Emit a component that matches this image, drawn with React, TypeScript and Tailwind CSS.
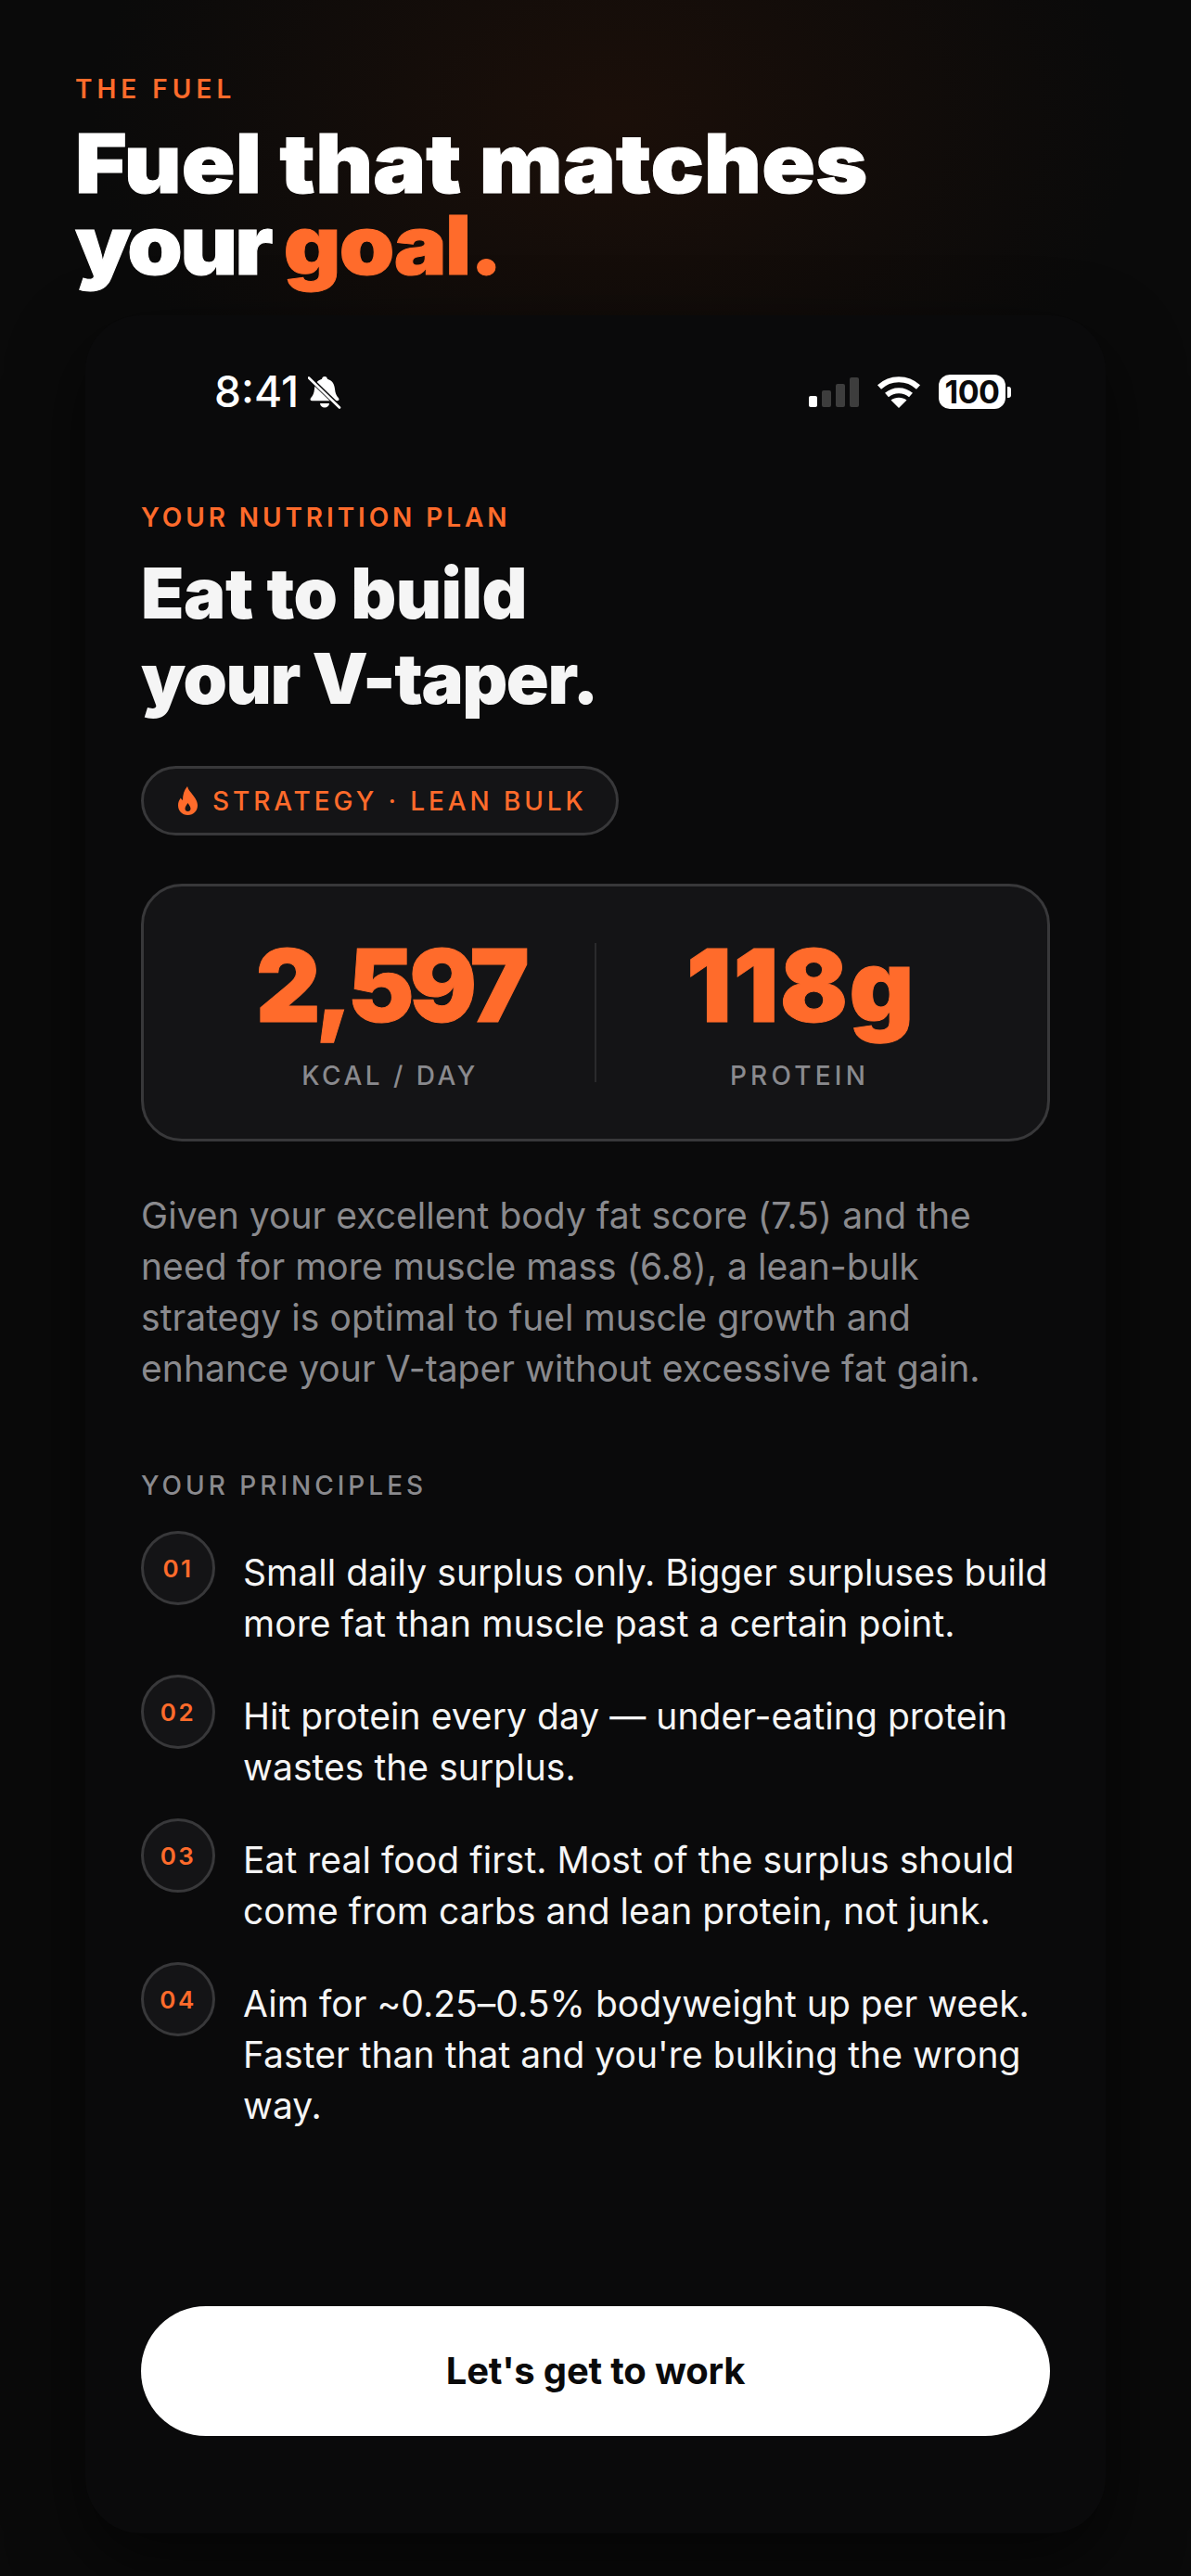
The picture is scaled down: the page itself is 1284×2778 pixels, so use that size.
function Flame() {
  return (
    <svg width="21" height="31" viewBox="0 0 21 31" className="shrink-0">
      <path fillRule="evenodd" fill="#ff6b2b" d="M10 0c1 4 3.500 6 6 9.500 2.500 3.500 5 6.500 5 11C21 26.500 16.500 31 10.500 31S0 26.500 0 20.500c0-3 1-5.500 2.800-8 .5 1.200 1.200 2 2.200 2.500C5 9 6.500 4 10 0Zm.5 18c-1.700 2.500-3 4.200-3 6 0 1.800 1.300 3 3 3s3-1.200 3-3c0-1.800-1.300-3.500-3-6Z" />
    </svg>
  );
}
function BellOff() {
  return (
    <svg width="36" height="36" viewBox="0 0 36 36" className="shrink-0">
      <path fill="#fff" d="M18 1c1.700 0 2.800 1.200 3 2.800 5 1.400 7.500 5.300 8 10.700.4 4.400 1.500 7.200 4 9.700 1 1 .5 3-1.500 3H4.500c-2 0-2.500-2-1.500-3 2.500-2.500 3.600-5.300 4-9.700.5-5.400 3-9.300 8-10.700C15.200 2.200 16.300 1 18 1Z" />
      <path fill="#fff" d="M13 30h10c-.3 2.800-2.300 4.500-5 4.500s-4.700-1.700-5-4.500Z" />
      <path stroke="#0a0a0b" strokeWidth="5" d="M2 3l32 31" />
      <path stroke="#fff" strokeWidth="2.600" strokeLinecap="round" d="M1 2.500l33 32" />
    </svg>
  );
}
function Signal() {
  return (
    <div className="flex items-end gap-[5px] h-[32px]">
      <div className="w-[9px] h-[12px] rounded-[2px] bg-white" />
      <div className="w-[10px] h-[18px] rounded-[2px] bg-[#3d3d3d]" />
      <div className="w-[10px] h-[25px] rounded-[2px] bg-[#3d3d3d]" />
      <div className="w-[10px] h-[32px] rounded-[2px] bg-[#3d3d3d]" />
    </div>
  );
}
function Wifi() {
  return (
    <svg width="48" height="34" viewBox="0 0 48 34">
      <path fill="none" stroke="#fff" strokeWidth="6" d="M3 11.500C15 .5 33 .5 45 11.500" />
      <path fill="none" stroke="#fff" strokeWidth="6" d="M11 20c7.500-6.500 18.500-6.500 26 0" />
      <path fill="#fff" d="M24 34l-8.500-8.500c5-3.600 12-3.600 17 0Z" />
    </svg>
  );
}
function Battery() {
  return (
    <div className="flex items-center gap-[2px]">
      <div className="w-[72px] h-[37px] rounded-[12px] bg-white flex items-center justify-center text-[#0a0a0b] text-[34px] font-bold leading-none tracking-[-0.5px]">100</div>
      <div className="w-[4px] h-[12px] rounded-r-[3px] bg-white" />
    </div>
  );
}
const principles = [
  ["01", "Small daily surplus only. Bigger surpluses build more fat than muscle past a certain point."],
  ["02", "Hit protein every day — under-eating protein wastes the surplus."],
  ["03", "Eat real food first. Most of the surplus should come from carbs and lean protein, not junk."],
  ["04", "Aim for ~0.25–0.5% bodyweight up per week. Faster than that and you're bulking the wrong way."],
];
export default function App() {
  return (
    <div className="w-[1284px] h-[2778px] overflow-hidden flex flex-col bg-[#0a0a0a] bg-[radial-gradient(ellipse_560px_400px_at_660px_130px,#1b0f09,#0a0a0a)] font-['Inter','Liberation_Sans',sans-serif]">
      <header className="px-[81px] pt-[82px] h-[340px] shrink-0">
        <div className="text-[#ff6b2b] text-[28px] leading-[28px] font-semibold tracking-[5px]">THE FUEL</div>
        <h1 className="mt-[22px] origin-left scale-x-[1.083] text-white text-[88px] leading-[88px] font-black tracking-[0.2px] [-webkit-text-stroke:1px_currentColor]">
          Fuel that matches<br /><span className="tracking-[-2.500px]">your</span> <span className="-ml-[5px] text-[#ff6b2b] tracking-[-1.500px]">goal.</span>
        </h1>
      </header>
      <main className="mx-[92px] h-[2392px] shrink-0 rounded-[60px] bg-[#0a0a0b] shadow-[0_30px_80px_rgba(0,0,0,0.6)] flex flex-col px-[60px]">
        <div className="flex items-center justify-between pl-[139px] pr-[42px] pt-[47px] h-[118px] -mx-[60px]">
          <div className="flex items-center gap-[10px]">
            <span className="text-white text-[46px] leading-[45px] font-medium">8:41</span>
            <BellOff />
          </div>
          <div className="flex items-center gap-[19px] pr-[60px]">
            <Signal />
            <Wifi />
            <Battery />
          </div>
        </div>
        <div className="mt-[83px] text-[#ff6b2b] text-[28px] leading-[34px] font-semibold tracking-[3.900px]">YOUR NUTRITION PLAN</div>
        <h2 className="mt-[18px] text-[#f5f5f5] text-[76px] leading-[92px] font-black tracking-[-1.500px]"><span className="tracking-[-0.500px]">Eat to build</span><br />your V-taper.</h2>
        <div className="mt-[49px] self-start h-[75px] w-[515px] rounded-full border-[3px] border-[#38383a] bg-[#141416] flex items-center pl-[37px] gap-[16px] text-[#ff6b2b] text-[28px] font-medium tracking-[3.900px]">
          <Flame />
          <span>STRATEGY · LEAN BULK</span>
        </div>
        <section className="mt-[52px] h-[278px] rounded-[44px] border-[3px] border-[#38383a] bg-[#141416] flex items-center px-[45px]">
          <div className="flex-1 flex flex-col items-center">
            <div className="text-[#ff6b2b] text-[108px] leading-[112px] font-black tracking-[-5.500px] [-webkit-text-stroke:1px_currentColor]">2,597</div>
            <div className="mt-[24px] text-[#8a8a8e] text-[28px] leading-[34px] font-medium tracking-[3.500px]">KCAL / DAY</div>
          </div>
          <div className="w-[2px] h-[150px] bg-[#2a2a2c]" />
          <div className="flex-1 flex flex-col items-center">
            <div className="text-[#ff6b2b] text-[108px] leading-[112px] font-black tracking-[1.500px] [-webkit-text-stroke:1px_currentColor]">118g</div>
            <div className="mt-[24px] mr-[3px] text-[#8a8a8e] text-[28px] leading-[34px] font-medium tracking-[4.200px]">PROTEIN</div>
          </div>
        </section>
        <p className="mt-[52px] text-[#8a8a8e] text-[39px] leading-[55px] tracking-[0.05px]">Given your excellent body fat score (7.5) and the need for more muscle mass (6.8), a lean-bulk strategy is optimal to fuel muscle growth and enhance your V-taper without excessive fat gain.</p>
        <div className="mt-[82px] text-[#8a8a8e] text-[28px] leading-[34px] font-medium tracking-[4px]">YOUR PRINCIPLES</div>
        <ul className="mt-[32px] flex flex-col gap-[28px]">
          {principles.map(([n, t]) => (
            <li key={n} className="flex gap-[30px]">
              <div className="w-[80px] h-[80px] shrink-0 rounded-full border-[3px] border-[#38383a] bg-[#141416] flex items-center justify-center text-[#ff6b2b] text-[26px] font-semibold tracking-[2.500px]">{n}</div>
              <p className="pt-[17px] text-[#f5f5f5] text-[39px] leading-[55px] tracking-[0.05px]">{t}</p>
            </li>
          ))}
        </ul>
        <div className="mt-auto mb-[105px]">
          <button className="w-full h-[140px] rounded-full bg-white text-[#0a0a0b] text-[40px] font-bold tracking-[-0.2px]">Let's get to work</button>
        </div>
      </main>
    </div>
  );
}
